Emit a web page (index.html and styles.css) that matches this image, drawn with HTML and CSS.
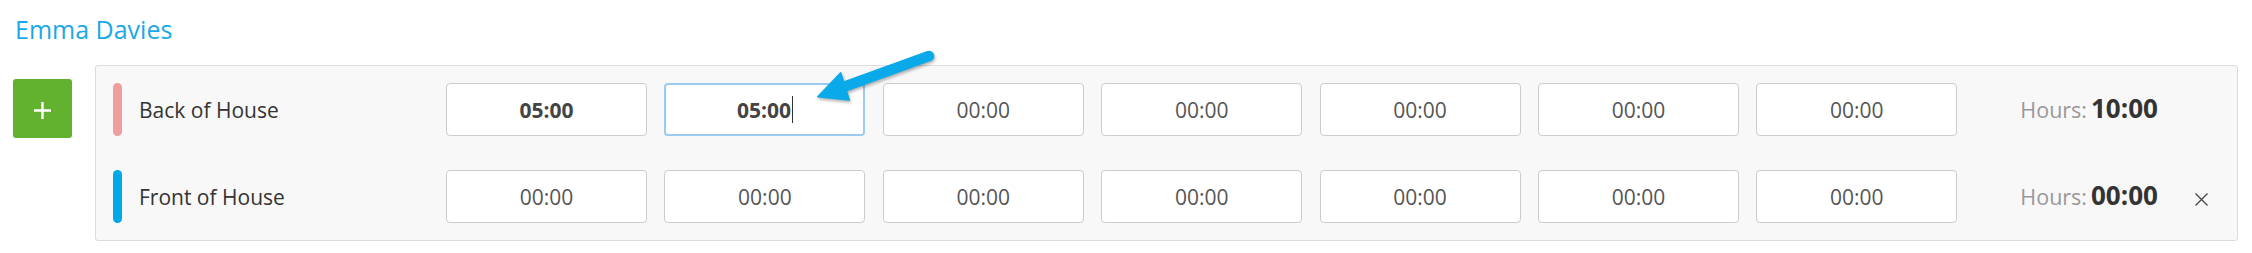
FILE: index.html
```html
<!DOCTYPE html>
<html>
<head>
<meta charset="utf-8">
<link rel="stylesheet" href="styles.css">
</head>
<body>
<div class="page">
  <div class="title">Emma Davies</div>
  <div class="main">
    <button class="add-btn" type="button" aria-label="Add">
      <svg width="17" height="17" viewBox="0 0 17 17"><path d="M0 8.5H17M8.5 0V17" stroke="#fff" stroke-width="2.4" fill="none"/></svg>
    </button>
    <div class="panel">
      <div class="row">
        <span class="bar bar-pink"></span>
        <span class="label">Back of House</span>
        <div class="cells">
          <div class="cell bold">05:00</div>
          <div class="cell bold focused">05:00<span class="caret"></span></div>
          <div class="cell">00:00</div>
          <div class="cell">00:00</div>
          <div class="cell">00:00</div>
          <div class="cell">00:00</div>
          <div class="cell">00:00</div>
        </div>
        <div class="hours"><span class="hours-label">Hours:</span><span class="hours-value">10:00</span></div>
      </div>
      <div class="row">
        <span class="bar bar-blue"></span>
        <span class="label">Front of House</span>
        <div class="cells">
          <div class="cell">00:00</div>
          <div class="cell">00:00</div>
          <div class="cell">00:00</div>
          <div class="cell">00:00</div>
          <div class="cell">00:00</div>
          <div class="cell">00:00</div>
          <div class="cell">00:00</div>
        </div>
        <div class="hours"><span class="hours-label">Hours:</span><span class="hours-value">00:00</span></div>
        <span class="remove" aria-label="Remove">
          <svg width="13" height="13" viewBox="0 0 13 13"><path d="M0.5 0.5L12.5 12.5M12.5 0.5L0.5 12.5" stroke="#444" stroke-width="1.3" fill="none"/></svg>
        </span>
      </div>
    </div>
  </div>
</div>
<svg class="arrow" width="150" height="75" viewBox="0 0 150 75">
  <line x1="42" y1="47.5" x2="129" y2="16" stroke="#0aaaea" stroke-width="10.5" stroke-linecap="round"/>
  <polygon points="17.7,56.7 40.7,32.7 49.3,60" fill="#0aaaea" stroke="#0aaaea" stroke-width="1.5" stroke-linejoin="round"/>
</svg>
</body>
</html>
```
FILE: styles.css
```css
html, body {
  margin: 0;
  padding: 0;
  background: #fff;
}
body {
  font-family: "Open Sans", "Liberation Sans", sans-serif;
  position: relative;
  width: 2252px;
  height: 253px;
  overflow: hidden;
}
.page {
  padding: 12.5px 14px 0 13px;
}
.title {
  font-size: 25px;
  line-height: 33px;
  color: #1aa8e6;
  margin-left: 2px;
}
.main {
  display: flex;
  align-items: flex-start;
  margin-top: 19.5px;
}
.add-btn {
  flex: none;
  width: 59px;
  height: 59px;
  margin-top: 14px;
  border: none;
  border-radius: 3px;
  background: #62b22f;
  padding: 0;
  display: flex;
  align-items: center;
  justify-content: center;
}
.add-btn svg {
  margin-top: 3px;
}
.panel {
  flex: 1;
  margin-left: 23px;
  border: 1px solid #dcdcdc;
  border-radius: 3px;
  background: #f8f8f8;
  padding: 17px 0 17px 17px;
  display: flex;
  flex-direction: column;
  gap: 34px;
}
.row {
  display: flex;
  align-items: center;
  height: 53px;
}
.bar {
  flex: none;
  width: 9px;
  height: 53px;
  border-radius: 5px;
}
.bar-pink { background: #ef9d9d; }
.bar-blue { background: #00a8e8; }
.label {
  flex: none;
  width: 307px;
  margin-left: 17px;
  font-size: 21px;
  color: #333;
}
.cells {
  display: flex;
  gap: 17.4px;
}
.cell {
  box-sizing: border-box;
  width: 201px;
  height: 53px;
  border: 1px solid #cccccc;
  border-radius: 4px;
  background: #fff;
  display: flex;
  align-items: center;
  justify-content: center;
  font-size: 21px;
  color: #555;
  position: relative;
}
.cell.bold {
  font-weight: bold;
  color: #444;
}
.cell.focused {
  border: 2px solid #9ccbf1;
}
.caret {
  display: inline-block;
  width: 1px;
  height: 27px;
  background: #333;
  margin-left: 1px;
}
.hours {
  flex: none;
  width: 150px;
  margin-left: 63px;
  margin-bottom: 3.8px;
  white-space: nowrap;
  display: flex;
  align-items: baseline;
  gap: 4px;
}
.hours-label {
  font-size: 21.5px;
  line-height: 1;
  color: #999;
}
.hours-value {
  font-size: 26px;
  line-height: 1;
  font-weight: bold;
  color: #333;
}
.remove {
  display: flex;
  margin-left: 25px;
  margin-top: 5px;
}
.arrow {
  position: absolute;
  left: 800px;
  top: 40px;
  filter: drop-shadow(1px 2px 1.5px rgba(0,0,0,0.3));
  pointer-events: none;
}
```
